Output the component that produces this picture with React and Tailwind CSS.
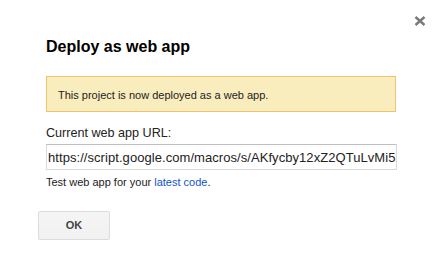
export default function App() {
  return (
    <div
      className="relative w-[441px] h-[259px] bg-white overflow-hidden text-[#222]"
      style={{ fontFamily: '"Liberation Sans", Arial, sans-serif' }}
    >
      <button className="absolute left-[412px] top-[14px] w-[16px] h-[14px] flex items-center justify-center">
        <svg width="12" height="10" viewBox="0 0 12 10">
          <path d="M1.5 1 L10.5 9 M10.5 1 L1.5 9" stroke="#7a7a7a" strokeWidth="2.4" strokeLinecap="butt" />
        </svg>
      </button>
      <div className="pl-[46px] pr-[45px] pt-[37px] flex flex-col">
        <h1 className="text-[16px] leading-[20px] font-bold text-black">Deploy as web app</h1>
        <div className="mt-[19px] h-[36px] border border-[#f0c36d] bg-[#f9edbe] pl-[11px] flex items-center">
          <span className="text-[11px] leading-[14px] text-[#222] pt-[2px]">This project is now deployed as a web app.</span>
        </div>
        <div className="mt-[14px] text-[12.6px] leading-[15px] text-[#222]">Current web app URL:</div>
        <div className="mt-[3px] h-[26px] w-[351px] border border-[#d9d9d9] border-t-[#c0c0c0] bg-white pl-[1px] overflow-hidden whitespace-nowrap flex items-center">
          <span className="text-[13px] leading-[15px] text-[#222] tracking-[0.06px]">
            https://script.google.com/macros/s/AKfycby12xZ2QTuLvMi5xQ7abcDeFg/exec
          </span>
        </div>
        <div className="mt-[6px] text-[11px] leading-[13px] text-[#222]">
          Test web app for your <a className="text-[#15c]">latest code</a>.
        </div>
        <button className="mt-[22px] -ml-[8px] w-[72px] h-[29px] rounded-[2px] border border-[#dcdcdc] bg-gradient-to-b from-[#f5f5f5] to-[#f1f1f1] text-[11px] font-bold text-[#444] flex items-center justify-center">
          OK
        </button>
      </div>
    </div>
  );
}
